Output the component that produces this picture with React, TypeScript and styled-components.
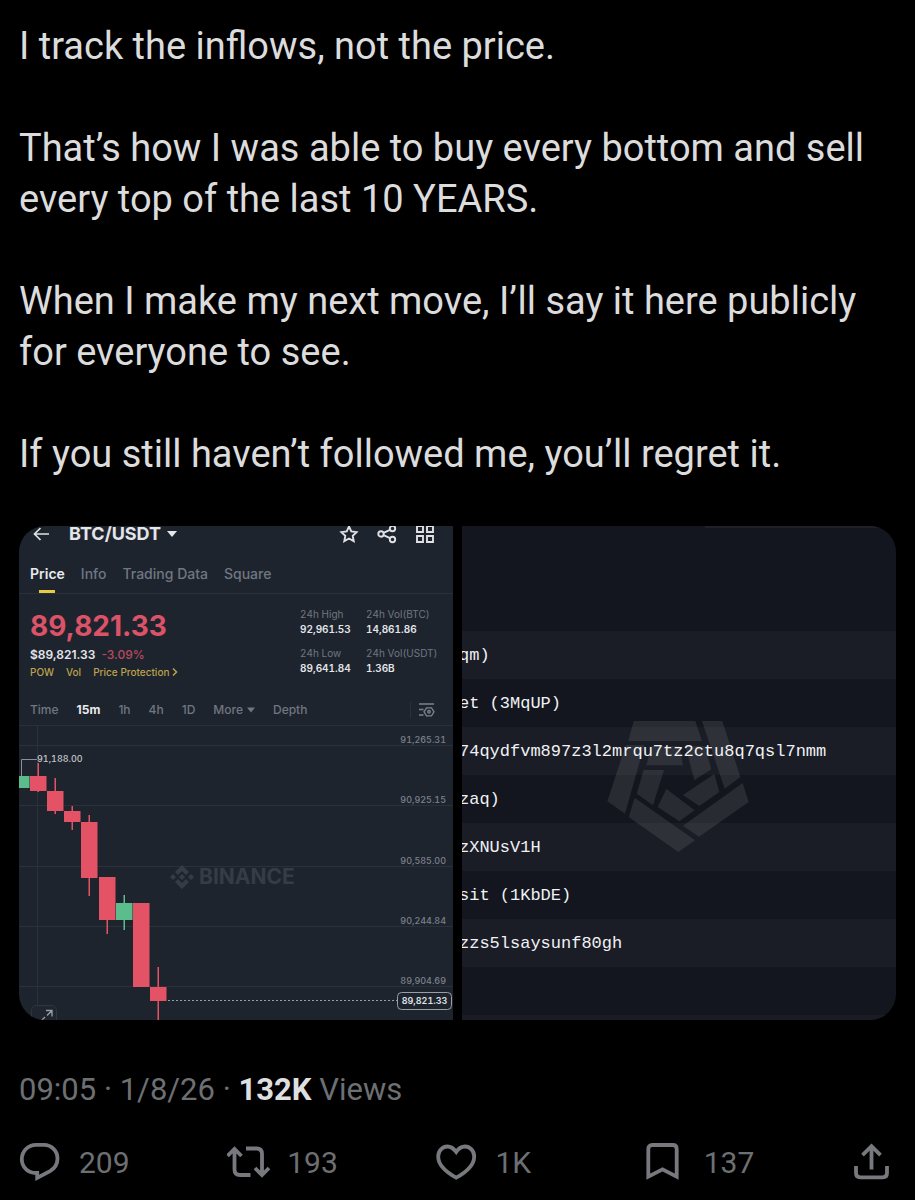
import React from "react";
import styled, { createGlobalStyle } from "styled-components";

const GlobalStyle = createGlobalStyle`
  *, *::before, *::after { box-sizing: border-box; }
  body {
    margin: 0;
    background: #000;
    color: #dcdcdd;
    font-family: Roboto, "Liberation Sans", sans-serif;
  }
  button {
    padding: 0;
    border: 0;
    background: none;
    color: inherit;
    font: inherit;
    cursor: pointer;
  }
  svg { display: block; flex: none; }
`;

const Post = styled.article`
  padding: 21px 19px 16px;
`;

const PostText = styled.div`
  display: flex;
  flex-direction: column;
  gap: 51px;
  font-size: 38px;
  line-height: 51px;
`;

const Paragraph = styled.p`
  margin: 0;
`;

const Media = styled.div`
  display: grid;
  grid-template-columns: minmax(0, 1fr) minmax(0, 1fr);
  gap: 9px;
  margin-top: 46px;
  border-radius: 26px;
  overflow: hidden;
`;

/* Exchange panel */

const Exchange = styled.section`
  display: flex;
  flex-direction: column;
  overflow: hidden;
  background: #1e242e;
  color: #e4e6ea;
  font-family: Inter, "Liberation Sans", sans-serif;
`;

const ExchangeHeader = styled.header`
  display: flex;
  align-items: center;
  height: 16px;
  padding: 0 18px 0 14px;
`;

const PairButton = styled.button`
  display: flex;
  align-items: center;
  gap: 6px;
  margin: 0 auto 0 19px;
  font-size: 18px;
  font-weight: 700;
  line-height: 20px;
`;

const HeaderTools = styled.div`
  display: flex;
  gap: 18px;
`;

const Tabs = styled.nav`
  display: flex;
  align-items: flex-end;
  gap: 16px;
  height: 52px;
  padding: 0 11px;
  border-bottom: 1px solid #29303a;
`;

const Tab = styled.button<{ $active?: boolean }>`
  display: flex;
  flex-direction: column;
  align-items: center;
  gap: 6px;
  font-size: 14px;
  font-weight: ${(p) => (p.$active ? 600 : 500)};
  line-height: 20px;
  color: ${(p) => (p.$active ? "#e8eaed" : "#707781")};
  &::after {
    content: "";
    width: 16px;
    height: 3px;
    background: ${(p) => (p.$active ? "#e9c843" : "transparent")};
  }
`;

const Summary = styled.div`
  display: flex;
  justify-content: space-between;
  height: 100px;
  padding: 13px 17px 0 11px;
`;

const PriceBlock = styled.div`
  padding-top: 3px;
`;

const LastPrice = styled.div`
  margin-bottom: 4px;
  color: #dc5266;
  font-size: 28px;
  font-weight: 700;
  line-height: 32px;
`;

const FiatPrice = styled.div`
  display: flex;
  gap: 6px;
  font-size: 12px;
  font-weight: 600;
  line-height: 18px;
`;

const Change = styled.span`
  color: #b84a5c;
  font-weight: 500;
`;

const Tags = styled.div`
  display: flex;
  gap: 12px;
  color: #bda24a;
  font-size: 10px;
  font-weight: 500;
  line-height: 16px;
`;

const TagLink = styled.a`
  display: flex;
  align-items: center;
  gap: 3px;
  color: inherit;
  text-decoration: none;
`;

const Stats = styled.dl`
  display: grid;
  grid-template-columns: 66px 70px;
  align-content: start;
  row-gap: 9px;
  margin: 0;
  font-size: 10px;
  line-height: 15px;
  font-variant-numeric: tabular-nums;
`;

const StatName = styled.dt`
  color: #707781;
  white-space: nowrap;
`;

const StatValue = styled.dd`
  margin: 0;
  font-weight: 600;
`;

const Intervals = styled.div`
  display: flex;
  align-items: center;
  gap: 18px;
  height: 32px;
  padding: 0 18px 0 11px;
  border-bottom: 1px solid #29303a;
`;

const Interval = styled.button<{ $active?: boolean }>`
  display: flex;
  align-items: center;
  gap: 4px;
  font-size: 12px;
  font-weight: ${(p) => (p.$active ? 700 : 500)};
  color: ${(p) => (p.$active ? "#e8eaed" : "#707781")};
`;

const ChartSettings = styled.button`
  margin-left: auto;
  padding-left: 7px;
  border-left: 1px solid #29303a;
  color: #7d838c;
`;

const Chart = styled.svg`
  width: 100%;
  height: auto;
  font-family: Inter, "Liberation Sans", sans-serif;
  font-size: 9px;
  font-variant-numeric: tabular-nums;
`;

/* Address panel */

const Addresses = styled.section`
  position: relative;
  padding-top: 105px;
  background: linear-gradient(#1f2127, #1f2127) right top / 44% 2px no-repeat #13161e;
  border-bottom: 5px solid #1a1c23;
`;

const AddressList = styled.ul`
  margin: 0;
  padding: 0 0 48px;
  list-style: none;
  font-family: "Liberation Mono", monospace;
  font-size: 17px;
  line-height: 50px;
  white-space: nowrap;
  color: #f0f1f4;
`;

const Address = styled.li`
  height: 48px;
  overflow: hidden;
  text-indent: -3px;
  &:nth-child(odd) { background: #1b1d26; }
`;

const Watermark = styled.div`
  position: absolute;
  top: 186px;
  left: 0;
  right: 0;
  display: flex;
  justify-content: center;
  pointer-events: none;
`;

/* Footer */

const Meta = styled.div`
  margin-top: 50px;
  color: #6d7073;
  font-size: 31px;
  line-height: 40px;
`;

const Strong = styled.strong`
  color: #dfdfe0;
  font-weight: 700;
`;

const Actions = styled.footer`
  display: grid;
  grid-template-columns: repeat(4, 1fr) auto;
  margin-top: 32px;
  color: #6d7073;
`;

const Action = styled.button`
  display: flex;
  align-items: center;
  gap: 16px;
  height: 40px;
  font-size: 30px;
`;

const paragraphs = [
  "I track the inflows, not the price.",
  "That’s how I was able to buy every bottom and sell every top of the last 10 YEARS.",
  "When I make my next move, I’ll say it here publicly for everyone to see.",
  "If you still haven’t followed me, you’ll regret it.",
];

const addresses = [
  "qm)",
  "et (3MqUP)",
  "74qydfvm897z3l2mrqu7tz2ctu8q7qsl7nmm",
  "zaq)",
  "zXNUsV1H",
  "sit (1KbDE)",
  "zzs5lsaysunf80gh",
];

const stats = [
  ["24h High", "92,961.53"],
  ["24h Vol(BTC)", "14,861.86"],
  ["24h Low", "89,641.84"],
  ["24h Vol(USDT)", "1.36B"],
];

const RED = "#e45365";
const GREEN = "#5bbd8b";

// x, body top, body bottom, wick top, wick bottom, colour
const candles: [number, number, number, number, number, string][] = [
  [-6, 50, 62, 50, 62, GREEN],
  [11, 50, 65, 37, 66, RED],
  [28, 65, 85, 52, 88, RED],
  [45, 85, 96, 80, 104, RED],
  [62, 96, 152, 89, 170, RED],
  [80, 151, 194, 151, 208, RED],
  [97, 177, 194, 169, 204, GREEN],
  [114, 177, 261, 177, 261, RED],
  [131, 261, 275, 241, 294, RED],
];

const levels: [number, string][] = [
  [19, "91,265.31"],
  [79, "90,925.15"],
  [140, "90,585.00"],
  [200, "90,244.84"],
  [260, "89,904.69"],
];

const watermarkShapes = [
  "95,27 280,27 300,87 79,87",
  "300,27 361,27 415,195 368,230",
  "422,213 440,270 291,374 243,341",
  "98,257 279,385 229,420 80,315",
  "71,100 127,100 69,305 16,268",
  "149,102 232,102 243,160 133,160",
  "250,102 308,102 328,172 277,205",
  "337,186 352,240 292,282 243,249",
  "193,231 278,295 232,328 167,285",
  "125,174 186,174 153,280 104,245",
];

const actionIcons = {
  retweet:
    "M0.500 14L7.500 7l7 7M7.500 8v19.500q0 5.500 5.500 5.500h10.500M19 6.500h10.500q5.500 0 5.500 5.500v20M28 26l7 7 7-7",
  like: "M20.200 10C17 5.500 13.500 4.500 11.500 4.500 6.500 4.500 2.200 8.800 2.200 14.500 2.200 22 9 29.500 20.200 35.700 31.500 29.500 38.200 22 38.200 14.500 38.200 8.800 33.800 4.500 29 4.500 26.800 4.500 23.200 5.500 20.200 10z",
  bookmark: "M4.300 34.700V7q0-4 4-4h20.400q4 0 4 4v27.700l-14.200-7.400z",
  share: "M19.500 27.500V4M10.500 13.200l9-9 9 9M4 24v7q0 4.300 4.300 4.300h22.400q4.300 0 4.300-4.300v-7",
  reply:
    "M17.500 31C9 31.300 2.800 25 2.800 17.300 2.800 9.300 9 2.800 17 2.800h8C32.500 2.800 38.500 9 38.500 16.500c0 5.500-3 10-7.500 12.600l-12.800 6.800v-4.900z",
};

function ActionIcon({ name }: { name: keyof typeof actionIcons }) {
  return (
    <svg width="44" height="40" viewBox="0 0 44 40" fill="none" stroke="#77797e" strokeWidth="3.8" aria-hidden="true">
      <path d={actionIcons[name]} />
    </svg>
  );
}

function Caret({ size }: { size: number }) {
  return (
    <svg width={size} height={size} viewBox="0 0 10 10" fill="currentColor" aria-hidden="true">
      <path d="M0 2h10L5 8z" />
    </svg>
  );
}

function PriceChart() {
  return (
    <Chart viewBox="0 0 434 294" role="img" aria-label="BTC/USDT 15 minute candles">
      <g stroke="#2a313b">
        {levels.map(([y]) => (
          <path key={y} d={`M0 ${y + 0.5}H434`} />
        ))}
        <path d="M18.500 0V294" />
      </g>
      <g fill="#353c46">
        <path d="M163 139l7 7-3 3-4-4-4 4-3-3zM163 163l7-7-3-3-4 4-4-4-3 3zM163 148l3 3-3 3-3-3zM154 148l3 3-3 3-3-3zM172 148l3 3-3 3-3-3z" />
        <text x="180" y="158" fontSize="21" fontWeight="700">BINANCE</text>
      </g>
      <path d="M2.500 50V33.500H18" stroke="#8a9098" fill="none" />
      {candles.map(([x, top, bottom, high, low, color]) => (
        <g key={x} fill={color}>
          <rect x={x + 7.500} y={high} width="1.500" height={low - high} />
          <rect x={x} y={top} width="16.500" height={bottom - top} />
        </g>
      ))}
      <text x="18" y="36" fill="#c3c6cb" fontWeight="500">91,188.00</text>
      <g fill="#7b818b" fontWeight="500" textAnchor="end">
        {levels.map(([y, label]) => (
          <text key={label} x="427" y={y - 2}>{label}</text>
        ))}
      </g>
      <path d="M149 274.500H378" stroke="#9a9fa6" strokeDasharray="2 2" />
      <rect x="378.500" y="266.500" width="54" height="17" rx="4" fill="#1e242e" stroke="#9a9fa6" />
      <text x="405.500" y="278" fill="#dfe1e4" fontWeight="600" textAnchor="middle">89,821.33</text>
      <rect x="12.500" y="279.500" width="25" height="24" rx="5" fill="#20262f" stroke="#2f3640" />
      <path d="M27 284.500h6v6M33 284.500l-5 5M26 291l-4 4" stroke="#9a9fa6" strokeWidth="1.300" fill="none" />
    </Chart>
  );
}

export default function App() {
  return (
    <Post>
      <GlobalStyle />
      <PostText>
        {paragraphs.map((text) => (
          <Paragraph key={text}>{text}</Paragraph>
        ))}
      </PostText>

      <Media>
        <Exchange>
          <ExchangeHeader>
            <button aria-label="Back">
              <svg width="17" height="16" viewBox="0 0 17 16" fill="none" stroke="#dfe1e4" strokeWidth="1.700">
                <path d="M16 8H1.500M7.500 2l-6 6 6 6" />
              </svg>
            </button>
            <PairButton>
              BTC/USDT
              <Caret size={10} />
            </PairButton>
            <HeaderTools>
              <button aria-label="Favourite">
                <svg width="20" height="20" viewBox="0 0 20 20" fill="none" stroke="#dfe1e4" strokeWidth="1.900">
                  <path d="M10 2.500l2.300 4.900 5.300.7-3.900 3.700 1 5.300L10 14.500l-4.700 2.600 1-5.300-3.900-3.700 5.300-.7z" />
                </svg>
              </button>
              <button aria-label="Share pair">
                <svg width="20" height="20" viewBox="0 0 20 20" fill="none" stroke="#dfe1e4" strokeWidth="1.900">
                  <circle cx="4" cy="10" r="2.700" />
                  <circle cx="15.500" cy="4.500" r="2.700" />
                  <circle cx="15.500" cy="15.500" r="2.700" />
                  <path d="M6.500 8.800l6.500-3M6.500 11.200l6.500 3" />
                </svg>
              </button>
              <button aria-label="Layout">
                <svg width="20" height="20" viewBox="0 0 20 20" fill="none" stroke="#dfe1e4" strokeWidth="1.900">
                  <path d="M2 2h6v6H2zM12 2h6v6h-6zM2 12h6v6H2zM12 12h6v6h-6z" />
                </svg>
              </button>
            </HeaderTools>
          </ExchangeHeader>

          <Tabs>
            <Tab $active>Price</Tab>
            <Tab>Info</Tab>
            <Tab>Trading Data</Tab>
            <Tab>Square</Tab>
          </Tabs>

          <Summary>
            <PriceBlock>
              <LastPrice>89,821.33</LastPrice>
              <FiatPrice>
                $89,821.33 <Change>-3.09%</Change>
              </FiatPrice>
              <Tags>
                <TagLink href="#pow">POW</TagLink>
                <TagLink href="#vol">Vol</TagLink>
                <TagLink href="#protection">
                  Price Protection
                  <svg width="6" height="10" viewBox="0 0 6 10" fill="none" stroke="currentColor" strokeWidth="1.500" aria-hidden="true">
                    <path d="M1 1.500L4.500 5 1 8.500" />
                  </svg>
                </TagLink>
              </Tags>
            </PriceBlock>
            <Stats>
              {stats.map(([name, value]) => (
                <div key={name}>
                  <StatName>{name}</StatName>
                  <StatValue>{value}</StatValue>
                </div>
              ))}
            </Stats>
          </Summary>

          <Intervals>
            <Interval>Time</Interval>
            <Interval $active>15m</Interval>
            <Interval>1h</Interval>
            <Interval>4h</Interval>
            <Interval>1D</Interval>
            <Interval>
              More
              <Caret size={8} />
            </Interval>
            <Interval>Depth</Interval>
            <ChartSettings aria-label="Chart settings">
              <svg width="17" height="16" viewBox="0 0 17 16" fill="none" stroke="currentColor" strokeWidth="1.300">
                <path d="M1 2h15M1 7.500h4.500M1 13h4.500M8.500 5.800h5L16 9.800l-2.500 4h-5L6 9.800z" />
                <circle cx="11" cy="9.800" r="1.300" />
              </svg>
            </ChartSettings>
          </Intervals>

          <PriceChart />
        </Exchange>

        <Addresses>
          <AddressList>
            {addresses.map((address) => (
              <Address key={address}>{address}</Address>
            ))}
          </AddressList>
          <Watermark>
            <svg width="155" height="146" viewBox="0 0 465 438" fill="#fff" fillOpacity="0.090" aria-hidden="true">
              {watermarkShapes.map((points) => (
                <polygon key={points} points={points} />
              ))}
            </svg>
          </Watermark>
        </Addresses>
      </Media>

      <Meta>
        09:05 · 1/8/26 · <Strong>132K</Strong> Views
      </Meta>

      <Actions>
        <Action aria-label="Reply, 209"><ActionIcon name="reply" />209</Action>
        <Action aria-label="Repost, 193"><ActionIcon name="retweet" />193</Action>
        <Action aria-label="Like, 1K"><ActionIcon name="like" />1K</Action>
        <Action aria-label="Bookmark, 137"><ActionIcon name="bookmark" />137</Action>
        <Action aria-label="Share"><ActionIcon name="share" /></Action>
      </Actions>
    </Post>
  );
}
